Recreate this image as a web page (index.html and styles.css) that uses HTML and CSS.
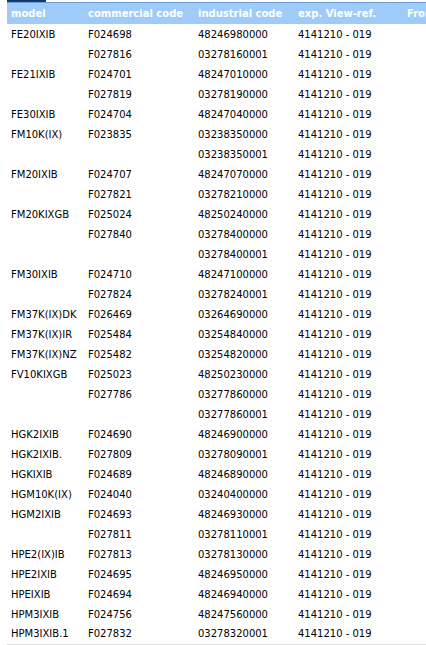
FILE: index.html
```html
<!DOCTYPE html>
<html lang="en">
<head>
  <meta charset="UTF-8" />
  <meta name="viewport" content="width=device-width, initial-scale=1.0"/>
  <title>Product codes</title>
  <link rel="stylesheet" href="styles.css">
</head>
<body>
  <div class="tabs">
    <div class="tab-active"></div>
  </div>
  <table class="codes">
    <thead>
      <tr>
        <th class="c-model">model</th>
        <th class="c-comm">commercial code</th>
        <th class="c-ind">industrial code</th>
        <th class="c-exp">exp. View-ref.</th>
        <th class="c-from">From</th>
      </tr>
    </thead>
    <tbody>
      <tr><td>FE20IXIB</td><td>F024698</td><td>48246980000</td><td>4141210 - 019</td><td></td></tr>
      <tr><td></td><td>F027816</td><td>03278160001</td><td>4141210 - 019</td><td></td></tr>
      <tr><td>FE21IXIB</td><td>F024701</td><td>48247010000</td><td>4141210 - 019</td><td></td></tr>
      <tr><td></td><td>F027819</td><td>03278190000</td><td>4141210 - 019</td><td></td></tr>
      <tr><td>FE30IXIB</td><td>F024704</td><td>48247040000</td><td>4141210 - 019</td><td></td></tr>
      <tr><td>FM10K(IX)</td><td>F023835</td><td>03238350000</td><td>4141210 - 019</td><td></td></tr>
      <tr><td></td><td></td><td>03238350001</td><td>4141210 - 019</td><td></td></tr>
      <tr><td>FM20IXIB</td><td>F024707</td><td>48247070000</td><td>4141210 - 019</td><td></td></tr>
      <tr><td></td><td>F027821</td><td>03278210000</td><td>4141210 - 019</td><td></td></tr>
      <tr><td>FM20KIXGB</td><td>F025024</td><td>48250240000</td><td>4141210 - 019</td><td></td></tr>
      <tr><td></td><td>F027840</td><td>03278400000</td><td>4141210 - 019</td><td></td></tr>
      <tr><td></td><td></td><td>03278400001</td><td>4141210 - 019</td><td></td></tr>
      <tr><td>FM30IXIB</td><td>F024710</td><td>48247100000</td><td>4141210 - 019</td><td></td></tr>
      <tr><td></td><td>F027824</td><td>03278240001</td><td>4141210 - 019</td><td></td></tr>
      <tr><td>FM37K(IX)DK</td><td>F026469</td><td>03264690000</td><td>4141210 - 019</td><td></td></tr>
      <tr><td>FM37K(IX)IR</td><td>F025484</td><td>03254840000</td><td>4141210 - 019</td><td></td></tr>
      <tr><td>FM37K(IX)NZ</td><td>F025482</td><td>03254820000</td><td>4141210 - 019</td><td></td></tr>
      <tr><td>FV10KIXGB</td><td>F025023</td><td>48250230000</td><td>4141210 - 019</td><td></td></tr>
      <tr><td></td><td>F027786</td><td>03277860000</td><td>4141210 - 019</td><td></td></tr>
      <tr><td></td><td></td><td>03277860001</td><td>4141210 - 019</td><td></td></tr>
      <tr><td>HGK2IXIB</td><td>F024690</td><td>48246900000</td><td>4141210 - 019</td><td></td></tr>
      <tr><td>HGK2IXIB.</td><td>F027809</td><td>03278090001</td><td>4141210 - 019</td><td></td></tr>
      <tr><td>HGKIXIB</td><td>F024689</td><td>48246890000</td><td>4141210 - 019</td><td></td></tr>
      <tr><td>HGM10K(IX)</td><td>F024040</td><td>03240400000</td><td>4141210 - 019</td><td></td></tr>
      <tr><td>HGM2IXIB</td><td>F024693</td><td>48246930000</td><td>4141210 - 019</td><td></td></tr>
      <tr><td></td><td>F027811</td><td>03278110001</td><td>4141210 - 019</td><td></td></tr>
      <tr><td>HPE2(IX)IB</td><td>F027813</td><td>03278130000</td><td>4141210 - 019</td><td></td></tr>
      <tr><td>HPE2IXIB</td><td>F024695</td><td>48246950000</td><td>4141210 - 019</td><td></td></tr>
      <tr><td>HPEIXIB</td><td>F024694</td><td>48246940000</td><td>4141210 - 019</td><td></td></tr>
      <tr><td>HPM3IXIB</td><td>F024756</td><td>48247560000</td><td>4141210 - 019</td><td></td></tr>
      <tr class="last"><td>HPM3IXIB.1</td><td>F027832</td><td>03278320001</td><td>4141210 - 019</td><td></td></tr>
    </tbody>
  </table>
</body>
</html>
```

FILE: styles.css
```css
* {
  margin: 0;
  padding: 0;
  box-sizing: border-box;
}

body {
  margin: 0 0 0 7px;
  background: #fff;
  color: #000;
  font-family: 'DejaVu Sans', Verdana, sans-serif;
  font-size: 10px;
  overflow: hidden;
}

/* Tab strip above the table */
.tabs {
  width: 600px;
  height: 3px;
  border-bottom: 1px solid #6d9fd6;
}

.tab-active {
  width: 39px;
  height: 2px;
  background: #13386b;
}

.codes {
  border-collapse: collapse;
  table-layout: fixed;
  width: 600px;
}

.codes th {
  height: 21px;
  background: #9ecbf7;
  color: #fff;
  font-weight: bold;
  text-align: left;
  padding: 0 4px;
  white-space: nowrap;
}

.codes td {
  height: 20px;
  padding: 0 4px;
  white-space: nowrap;
  vertical-align: middle;
}

.codes .last td {
  border-bottom: 1px solid #dcdcdc;
}

.c-model { width: 77px; }
.c-comm { width: 110px; }
.c-ind { width: 100px; }
.c-exp { width: 109px; }
```
